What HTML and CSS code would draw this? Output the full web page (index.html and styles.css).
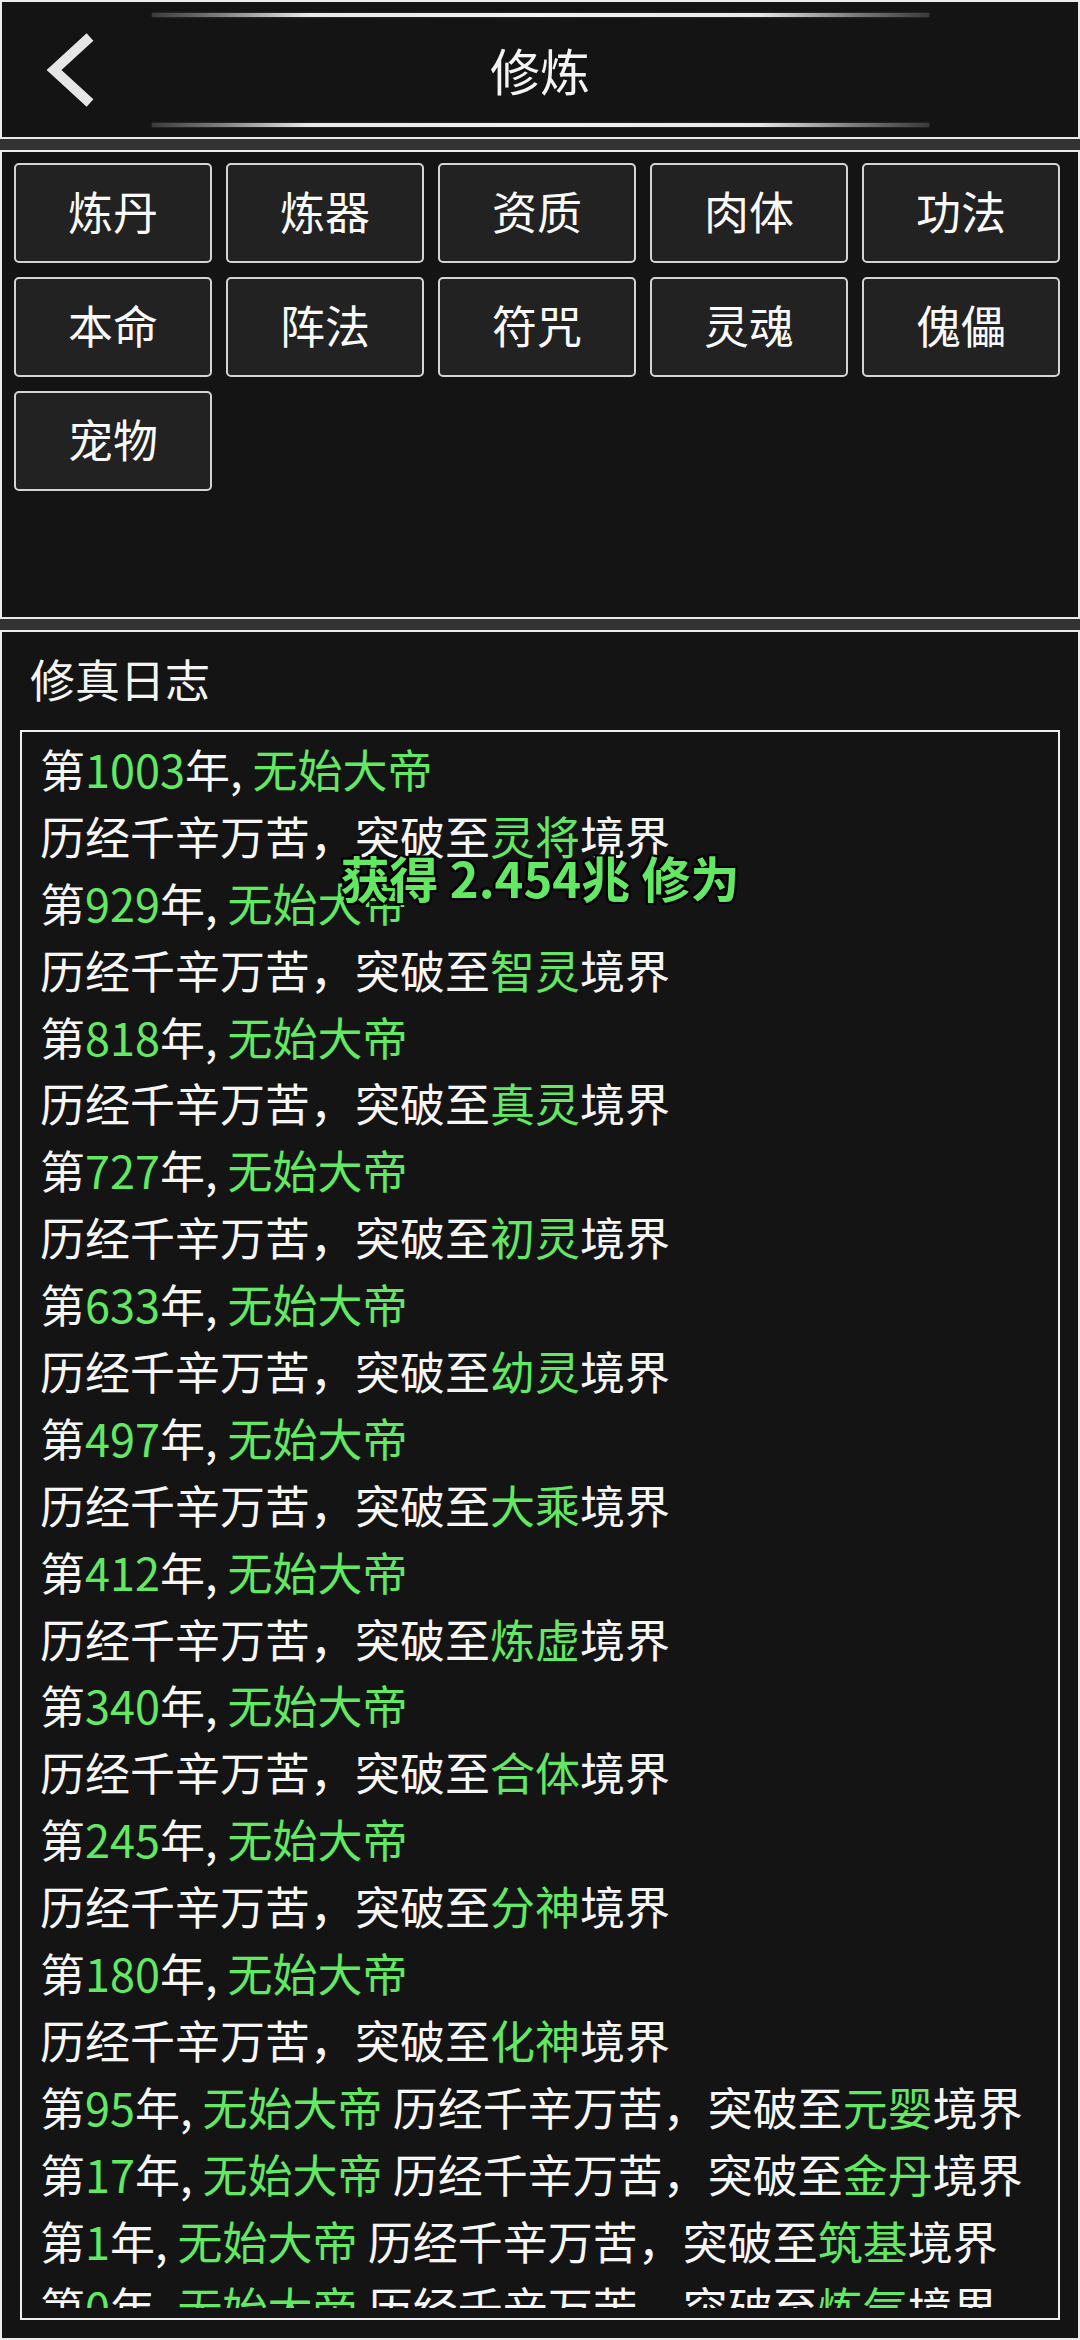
FILE: index.html
```html
<!DOCTYPE html>
<html lang="zh-CN">
<head>
<meta charset="utf-8">
<title>修炼</title>
<link rel="stylesheet" href="styles.css">
</head>
<body>
<header class="topbar">
  <div class="deco"></div>
  <div class="titlerow">
    <a class="back" href="#">
      <svg width="60" height="80" viewBox="0 0 60 80"><polyline points="50,7 14,40 50,73" fill="none" stroke="#e6e6e6" stroke-width="10" stroke-linejoin="miter" stroke-miterlimit="10"/></svg>
    </a>
    <h1 class="title">修炼</h1>
    <span></span>
  </div>
  <div class="deco"></div>
</header>

<section class="panel menu">
  <div class="btn">炼丹</div>
  <div class="btn">炼器</div>
  <div class="btn">资质</div>
  <div class="btn">肉体</div>
  <div class="btn">功法</div>
  <div class="btn">本命</div>
  <div class="btn">阵法</div>
  <div class="btn">符咒</div>
  <div class="btn">灵魂</div>
  <div class="btn">傀儡</div>
  <div class="btn">宠物</div>
</section>

<section class="panel journal">
  <div class="label">修真日志</div>
  <div class="logbox">
    <div class="log">
      <div class="ln">第<span class="g">1003</span>年, <span class="g">无始大帝</span></div>
      <div class="ln">历经千辛万苦，突破至<span class="g">灵将</span>境界</div>
      <div class="ln">第<span class="g">929</span>年, <span class="g">无始大帝</span></div>
      <div class="ln">历经千辛万苦，突破至<span class="g">智灵</span>境界</div>
      <div class="ln">第<span class="g">818</span>年, <span class="g">无始大帝</span></div>
      <div class="ln">历经千辛万苦，突破至<span class="g">真灵</span>境界</div>
      <div class="ln">第<span class="g">727</span>年, <span class="g">无始大帝</span></div>
      <div class="ln">历经千辛万苦，突破至<span class="g">初灵</span>境界</div>
      <div class="ln">第<span class="g">633</span>年, <span class="g">无始大帝</span></div>
      <div class="ln">历经千辛万苦，突破至<span class="g">幼灵</span>境界</div>
      <div class="ln">第<span class="g">497</span>年, <span class="g">无始大帝</span></div>
      <div class="ln">历经千辛万苦，突破至<span class="g">大乘</span>境界</div>
      <div class="ln">第<span class="g">412</span>年, <span class="g">无始大帝</span></div>
      <div class="ln">历经千辛万苦，突破至<span class="g">炼虚</span>境界</div>
      <div class="ln">第<span class="g">340</span>年, <span class="g">无始大帝</span></div>
      <div class="ln">历经千辛万苦，突破至<span class="g">合体</span>境界</div>
      <div class="ln">第<span class="g">245</span>年, <span class="g">无始大帝</span></div>
      <div class="ln">历经千辛万苦，突破至<span class="g">分神</span>境界</div>
      <div class="ln">第<span class="g">180</span>年, <span class="g">无始大帝</span></div>
      <div class="ln">历经千辛万苦，突破至<span class="g">化神</span>境界</div>
      <div class="ln">第<span class="g">95</span>年, <span class="g">无始大帝</span> 历经千辛万苦，突破至<span class="g">元婴</span>境界</div>
      <div class="ln">第<span class="g">17</span>年, <span class="g">无始大帝</span> 历经千辛万苦，突破至<span class="g">金丹</span>境界</div>
      <div class="ln">第<span class="g">1</span>年, <span class="g">无始大帝</span> 历经千辛万苦，突破至<span class="g">筑基</span>境界</div>
      <div class="ln">第<span class="g">0</span>年, <span class="g">无始大帝</span> 历经千辛万苦，突破至<span class="g">炼气</span>境界</div>
    </div>
  </div>
  <div class="toast">获得 2.454兆 修为</div>
</section>
</body>
</html>
```
FILE: styles.css
```css
* { box-sizing: border-box; }

html, body {
  margin: 0;
  padding: 0;
}

body {
  width: 1080px;
  height: 2340px;
  background: #333333;
  font-family: "Noto Sans CJK SC", "Noto Sans", sans-serif;
  color: #f4f4f4;
  display: flex;
  flex-direction: column;
  gap: 11px;
  overflow: hidden;
}

.topbar {
  height: 139px;
  flex: none;
  background: #141414;
  border: 2px solid #ececec;
  padding: 11px 0 10px;
  display: flex;
  flex-direction: column;
}

.deco {
  width: 777px;
  height: 4px;
  margin: 0 auto;
  flex: none;
  background: linear-gradient(to right, #3a3a3a 0%, #777 8%, #e8e8e8 20%, #f2f2f2 50%, #e8e8e8 78%, #777 91%, #3a3a3a 100%);
  box-shadow: 0 0 2px rgba(255, 255, 255, 0.25);
}

.titlerow {
  flex: 1;
  display: grid;
  grid-template-columns: 1fr auto 1fr;
  align-items: center;
}

.back {
  justify-self: start;
  margin-left: 38px;
  display: block;
  width: 60px;
  height: 80px;
}

.back svg { display: block; }

.title {
  margin: 0 0 3px;
  font-size: 50px;
  font-weight: 400;
  line-height: 1;
  color: #f4f4f4;
}

.panel {
  background: #141414;
  border: 2px solid #ececec;
}

.menu {
  height: 469px;
  flex: none;
  padding: 11px 0 0 12px;
  display: grid;
  grid-template-columns: repeat(5, 198px);
  grid-auto-rows: 100px;
  column-gap: 14px;
  row-gap: 14px;
  align-content: start;
}

.btn {
  background: #222222;
  border: 2px solid #d4d4d4;
  border-radius: 5px;
  color: #fafafa;
  font-size: 45px;
  line-height: 1;
  padding-bottom: 5px;
  display: flex;
  align-items: center;
  justify-content: center;
}

.journal {
  flex: 1;
  min-height: 0;
  position: relative;
  display: flex;
  flex-direction: column;
  padding: 0 18px 18px;
}

.label {
  height: 98px;
  flex: none;
  display: flex;
  align-items: center;
  padding-left: 10px;
  padding-bottom: 5px;
  font-size: 45px;
  line-height: 1;
  color: #f4f4f4;
}

.logbox {
  flex: 1;
  border: 2px solid #efefef;
  padding: 4px 10px 10px 18px;
  display: flex;
  flex-direction: column;
  min-height: 0;
}

.log {
  flex: 1;
  overflow: hidden;
  min-height: 0;
}

.ln {
  font-size: 45px;
  line-height: 66.9px;
  height: 66.9px;
  white-space: nowrap;
  color: #f6f6f6;
}

.g { color: #62e862; }

.toast {
  position: absolute;
  left: 0;
  right: 0;
  top: 220px;
  text-align: center;
  font-size: 49px;
  font-weight: 700;
  line-height: 49px;
  color: #62e862;
  text-shadow: 2px 2px 0 #000, -2px -2px 0 #000, 2px -2px 0 #000, -2px 2px 0 #000, 0 2px 1px #000, 0 -2px 1px #000, 2px 0 1px #000, -2px 0 1px #000;
}
```
